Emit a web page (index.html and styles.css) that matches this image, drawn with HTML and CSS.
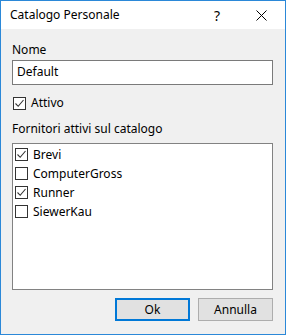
FILE: index.html
```html
<!DOCTYPE html>
<html lang="it">
<head>
  <meta charset="UTF-8">
  <title>Catalogo Personale</title>
  <link rel="stylesheet" href="styles.css">
</head>
<body>

  <div class="finestra">
    <div class="barra-titolo">
      <span class="titolo">Catalogo Personale</span>
      <span class="aiuto">?</span>
      <span class="chiudi">
        <svg width="11" height="11" viewBox="0 0 11 11"><path d="M0.5 0.5 L10.5 10.5 M10.5 0.5 L0.5 10.5" stroke="#000" stroke-width="1" fill="none"/></svg>
      </span>
    </div>

    <div class="contenuto">
      <div class="etichetta">Nome</div>
      <div class="casella-testo">Default</div>

      <div class="riga-check attivo">
        <span class="spunta"><svg width="11" height="11" viewBox="0 0 11 11"><path d="M1.5 5.5 L4.2 8.3 L9.5 2" stroke="#333" stroke-width="1.1" fill="none"/></svg></span>
        Attivo
      </div>

      <div class="etichetta fornitori">Fornitori attivi sul catalogo</div>
      <div class="lista">
        <div class="riga-check"><span class="spunta"><svg width="11" height="11" viewBox="0 0 11 11"><path d="M1.5 5.5 L4.2 8.3 L9.5 2" stroke="#333" stroke-width="1.1" fill="none"/></svg></span>Brevi</div>
        <div class="riga-check"><span class="spunta"></span>ComputerGross</div>
        <div class="riga-check"><span class="spunta"><svg width="11" height="11" viewBox="0 0 11 11"><path d="M1.5 5.5 L4.2 8.3 L9.5 2" stroke="#333" stroke-width="1.1" fill="none"/></svg></span>Runner</div>
        <div class="riga-check"><span class="spunta"></span>SiewerKau</div>
      </div>

      <div class="pulsanti">
        <button class="pulsante predefinito">Ok</button>
        <button class="pulsante">Annulla</button>
      </div>
    </div>
  </div>

</body>
</html>
```

FILE: styles.css
```css
body {
  margin: 0;
  font-family: "Noto Sans", "Open Sans", sans-serif;
  font-size: 12px;
  color: #000;
}

.finestra {
  width: 286px;
  height: 335px;
  box-sizing: border-box;
  border: 1px solid #2b88d8;
  display: flex;
  flex-direction: column;
  background-color: #f0f0f0;
}

.barra-titolo {
  height: 28px;
  background-color: #fff;
  display: flex;
  align-items: center;
  padding-left: 9px;
}

.titolo {
  flex: 1;
  line-height: 16px;
}

.aiuto {
  font-size: 14px;
  width: 14px;
  text-align: center;
  margin-right: 32px;
}

.chiudi {
  display: flex;
  margin-right: 18px;
}

.contenuto {
  flex: 1;
  padding: 13px 12px 0 11px;
  display: flex;
  flex-direction: column;
}

.etichetta {
  line-height: 16px;
}

.casella-testo {
  margin-top: 2px;
  height: 25px;
  box-sizing: border-box;
  border: 1px solid #7a7a7a;
  background-color: #fff;
  padding-left: 4px;
  line-height: 22px;
}

.riga-check {
  display: flex;
  align-items: center;
  line-height: 19px;
}

.attivo {
  margin-top: 10px;
  margin-left: 1px;
  line-height: 16px;
}

.spunta {
  width: 13px;
  height: 13px;
  box-sizing: border-box;
  border: 1px solid #333;
  background-color: #fff;
  margin-right: 5px;
  display: flex;
  align-items: center;
  justify-content: center;
}

.fornitori {
  margin-top: 10px;
}

.lista {
  margin-top: 6px;
  height: 147px;
  box-sizing: border-box;
  border: 1px solid #828282;
  background-color: #fff;
  padding: 1px 0 0 2px;
}

.pulsanti {
  margin-top: 8px;
  display: flex;
  justify-content: flex-end;
  gap: 8px;
}

.pulsante {
  width: 75px;
  height: 23px;
  box-sizing: border-box;
  border: 1px solid #adadad;
  background-color: #e1e1e1;
  font-family: inherit;
  font-size: 12px;
  color: #000;
  padding: 0;
}

.predefinito {
  border: 2px solid #0078d7;
}
```
